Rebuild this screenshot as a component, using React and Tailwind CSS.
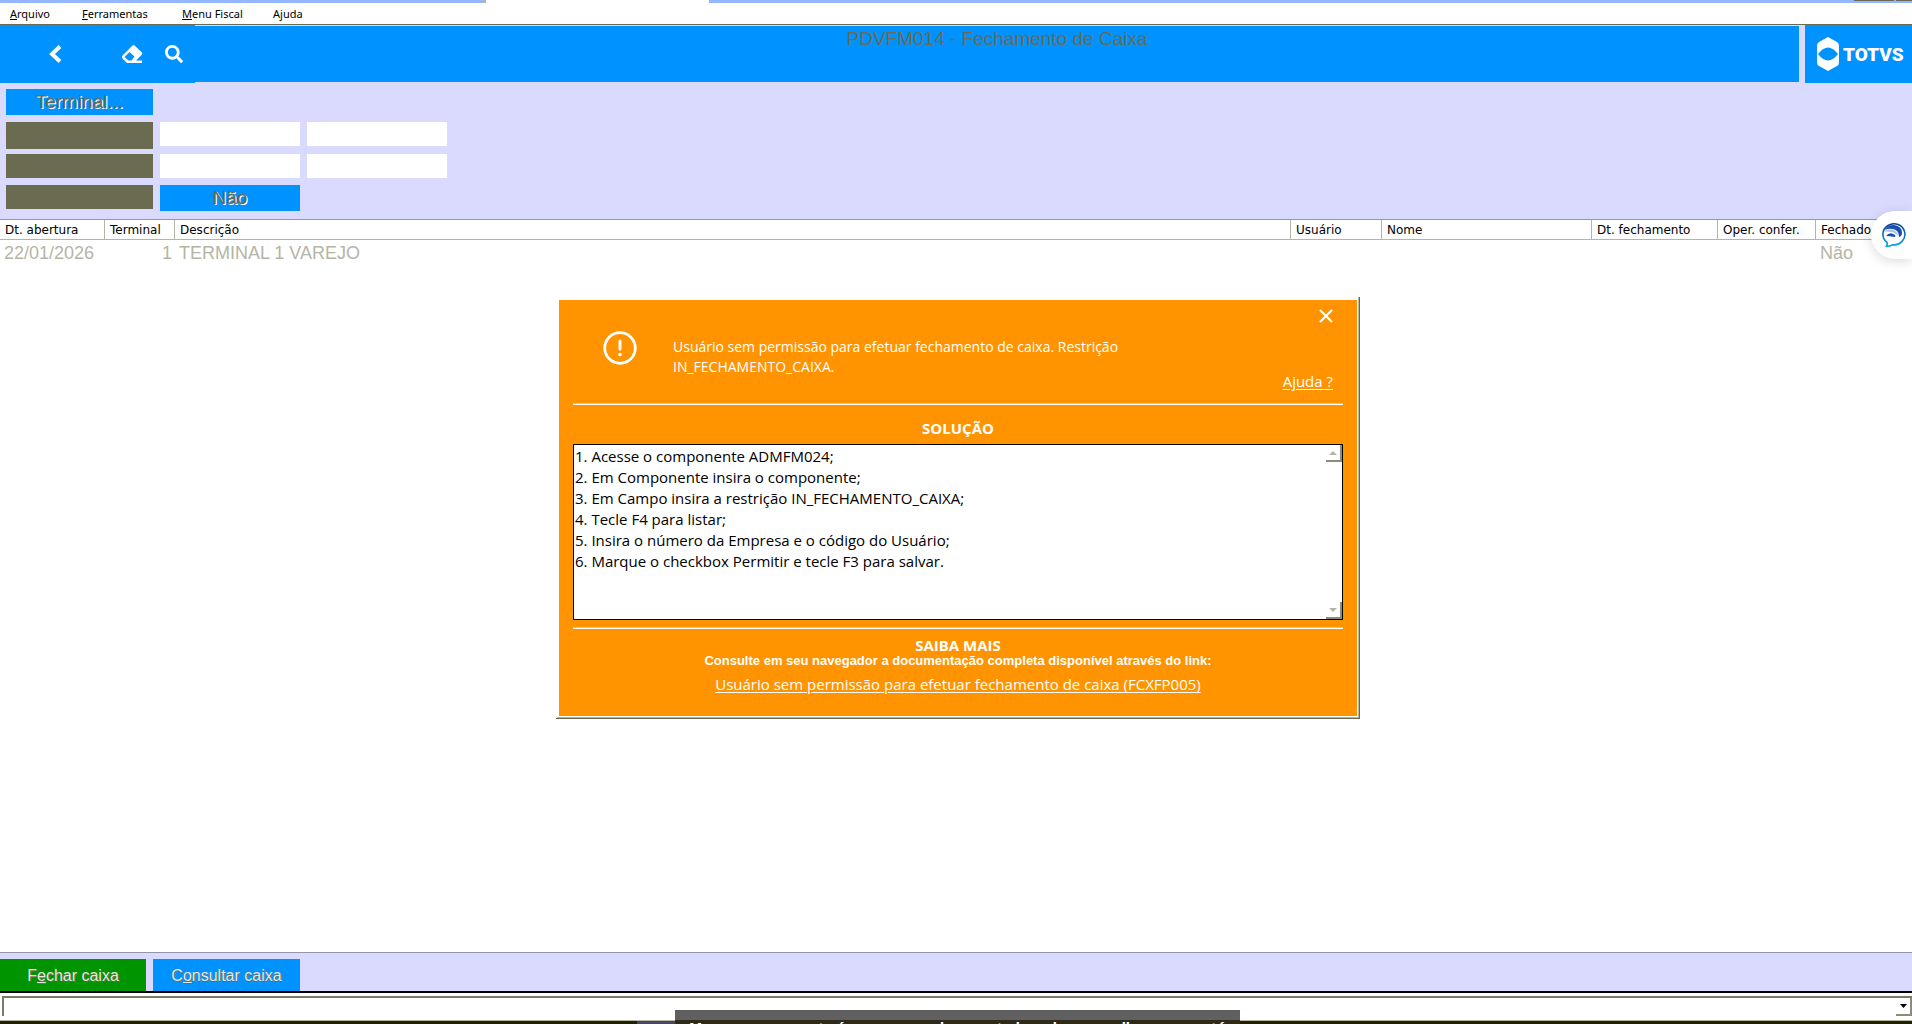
import React, { useState } from 'react'
import { FaSearch } from 'react-icons/fa'

const columns = [
  { label: 'Dt. abertura', width: 'w-[105px]' },
  { label: 'Terminal', width: 'w-[70px]' },
  { label: 'Descrição', width: 'w-auto' },
  { label: 'Usuário', width: 'w-[91px]' },
  { label: 'Nome', width: 'w-[210px]' },
  { label: 'Dt. fechamento', width: 'w-[126px]' },
  { label: 'Oper. confer.', width: 'w-[98px]' },
  { label: 'Fechado', width: 'w-[96px]' },
]

const rows = [
  { abertura: '22/01/2026', terminal: 1, descricao: 'TERMINAL 1 VAREJO', usuario: '', nome: '', fechamento: '', confer: '', fechado: 'Não' },
]

const solution = [
  '1. Acesse o componente ADMFM024;',
  '2. Em Componente insira o componente;',
  '3. Em Campo insira a restrição IN_FECHAMENTO_CAIXA;',
  '4. Tecle F4 para listar;',
  '5. Insira o número da Empresa e o código do Usuário;',
  '6. Marque o checkbox Permitir e tecle F3 para salvar.',
].join('\n')

const MenuBar = () => (
  <nav className="flex h-[22px] shrink-0 items-center border-b border-[#6b6b52] bg-white pt-px pl-[10px] font-['Noto_Sans',sans-serif] text-[11px] text-black">
    <button className="w-[72px] text-left"><u>A</u>rquivo</button>
    <button className="w-[100px] text-left"><u>F</u>erramentas</button>
    <button className="w-[91px] text-left"><u>M</u>enu Fiscal</button>
    <button className="text-left">A<u>j</u>uda</button>
  </nav>
)

const TotvsLogo = () => (
  <div className="flex w-[107px] items-center gap-1 bg-[#0092ff] pl-[12px] text-white">
    <svg width="22" height="34" viewBox="0 0 22 34" className="shrink-0">
      <path fill="#fff" d="M11 0 20 5Q22 6 22 9V25Q22 28 20 29L11 34 2 29Q0 28 0 25V9Q0 6 2 5Z" />
      <path fill="#0092ff" d="M1 17Q6 10.500 11 10.500T21 17Q16 23.500 11 23.500T1 17Z" />
    </svg>
    <span className="font-['Roboto',sans-serif] text-[19px] leading-none font-black">TOTVS</span>
  </div>
)

const Header = () => (
  <header className="flex h-[58px] shrink-0">
    <div className="flex w-[195px] items-center bg-[#0092ff] text-white">
      <button aria-label="Voltar" className="ml-[49px]">
        <svg width="13" height="18" viewBox="0 0 13 18">
          <path fill="none" stroke="#fff" strokeWidth="4" d="M11 1.500 3 9 11 16.500" />
        </svg>
      </button>
      <button aria-label="Limpar" className="ml-[60px]">
        <svg width="21" height="18" viewBox="0 0 21 18">
          <path fill="#fff" fillRule="evenodd" d="M12 0 20 7.500Q20.500 8.500 20 9.500L14 15.500H20V18H5L0 13V11L10.500 .5Q11 0 12 0ZM7.500 7 2.500 12 6.500 15.500H9.500L12.500 11.500Z" />
        </svg>
      </button>
      <button aria-label="Pesquisar" className="ml-[22px]"><FaSearch size={18} /></button>
    </div>
    <h1 className="my-px flex-1 bg-[#0092ff] text-center text-[19px] leading-[26px] text-[#6b6b52]">PDVFM014 - Fechamento de Caixa</h1>
    <div className="w-[6px]" />
    <TotvsLogo />
  </header>
)

const Filters = () => (
  <form className="grid shrink-0 grid-cols-[147px_140px_140px] grid-rows-[33px_32px_31px_34px] items-start gap-x-[7px] px-[6px] pt-[6px] text-[19px]">
    <button type="button" className="col-span-3 h-[26px] w-[147px] bg-[#0092ff] leading-[26px] text-[#6b6b52] [text-shadow:1px_1px_0_#fff]">Terminal...</button>
    <label htmlFor="abertura" className="h-[27px] bg-[#6b6b52]" />
    <input id="abertura" aria-label="Abertura inicial" className="h-6 w-full bg-white px-1 outline-none" />
    <input aria-label="Abertura final" className="h-6 w-full bg-white px-1 outline-none" />
    <label htmlFor="fechamento" className="h-6 bg-[#6b6b52]" />
    <input id="fechamento" aria-label="Fechamento inicial" className="h-6 w-full bg-white px-1 outline-none" />
    <input aria-label="Fechamento final" className="h-6 w-full bg-white px-1 outline-none" />
    <label htmlFor="fechado" className="h-6 bg-[#6b6b52]" />
    <button id="fechado" aria-label="Fechado: Não" type="button" className="h-[26px] bg-[#0092ff] leading-[26px] text-[#6b6b52] [text-shadow:1px_1px_0_#fff]">Não</button>
  </form>
)

const CashTable = () => (
  <table className="w-full table-fixed border-separate border-spacing-0 text-left">
    <thead>
      <tr className="h-5 font-['DejaVu_Sans',sans-serif] text-[12px] leading-[18px] text-black">
        {columns.map((c) => (
          <th key={c.label} className={`${c.width} overflow-hidden border-r border-b border-[#b5b5a5] p-0 pl-[5px] font-normal whitespace-nowrap`}>{c.label}</th>
        ))}
      </tr>
    </thead>
    <tbody>
      {rows.map((r) => (
        <tr key={r.terminal} className="text-[18px] leading-[26px] whitespace-nowrap text-[#b5b5a5]">
          <td className="p-0 pl-1">{r.abertura}</td>
          <td className="p-0 pr-[3px] text-right">{r.terminal}</td>
          <td className="p-0 pl-1">{r.descricao}</td>
          <td>{r.usuario}</td>
          <td>{r.nome}</td>
          <td>{r.fechamento}</td>
          <td>{r.confer}</td>
          <td className="p-0 pl-1">{r.fechado}</td>
        </tr>
      ))}
    </tbody>
  </table>
)

const Divider = () => <div className="h-[2px] border-t border-[#c6c6c6] bg-white" />

const ErrorDialog = ({ onClose }) => (
  <div role="dialog" aria-label="Aviso" className="absolute top-[77px] left-1/2 w-[804px] -translate-x-[400px] border-r border-b border-[#6b6b52] bg-white pl-px">
    <div className="border-r border-b border-[#b5b5a5] pt-[3px] pr-px pb-px pl-[2px]">
      <div className="bg-[#ff9400] px-[14px] pb-[22px] font-['Open_Sans',sans-serif] text-white">
        <div className="flex h-[103px]">
          <svg width="34" height="34" viewBox="0 0 34 34" className="mt-[31px] ml-[30px] shrink-0">
            <circle cx="17" cy="17" r="15.300" fill="none" stroke="#fff" strokeWidth="2.800" />
            <path d="M17 10V18" stroke="#fff" strokeWidth="3" strokeLinecap="round" />
            <circle cx="17" cy="23.500" r="1.800" fill="#fff" />
          </svg>
          <p className="mt-[37px] ml-[36px] w-[480px] text-[14px] leading-5">
            Usuário sem permissão para efetuar fechamento de caixa. Restrição IN_FECHAMENTO_CAIXA.
          </p>
          <div className="ml-auto flex flex-col items-end pt-[9px] pr-[10px]">
            <button aria-label="Fechar" onClick={onClose}>
              <svg width="14" height="14" viewBox="0 0 14 14">
                <path d="M1 1 13 13M13 1 1 13" stroke="#fff" strokeWidth="2.200" />
              </svg>
            </button>
            <a href="#ajuda" className="mt-[48px] text-[15px] leading-5 underline underline-offset-2">Ajuda ?</a>
          </div>
        </div>
        <Divider />
        <h2 className="pt-[13px] pb-[6px] text-center text-[15px] leading-5 font-bold">SOLUÇÃO</h2>
        <div className="relative h-[176px] border border-black bg-white">
          <textarea readOnly aria-label="Solução" value={solution} className="block h-full w-full resize-none overflow-hidden pt-px pl-px text-[15px] leading-[21px] text-black outline-none" />
          <button aria-label="Rolar para cima" className="absolute top-0 right-0 flex h-[17px] w-4 items-center justify-center border-r-2 border-b-2 border-[#8c8c7b] bg-white">
            <svg width="8" height="4" viewBox="0 0 8 4"><path fill="#b5b5a5" d="M4 0 8 4H0Z" /></svg>
          </button>
          <button aria-label="Rolar para baixo" className="absolute right-0 bottom-0 flex h-[17px] w-4 items-center justify-center border-r-2 border-b-2 border-[#8c8c7b] bg-white">
            <svg width="8" height="4" viewBox="0 0 8 4"><path fill="#b5b5a5" d="M0 0H8L4 4Z" /></svg>
          </button>
        </div>
        <div className="h-[7px]" />
        <Divider />
        <h2 className="pt-[8px] text-center text-[15px] leading-4 font-bold">SAIBA MAIS</h2>
        <p className="text-center font-['Liberation_Sans',sans-serif] text-[13px] leading-4 font-bold">Consulte em seu navegador a documentação completa disponível através do link:</p>
        <p className="pt-[5px] text-center text-[15px] leading-5">
          <a href="#fcxfp005" className="underline underline-offset-2">Usuário sem permissão para efetuar fechamento de caixa (FCXFP005)</a>
        </p>
      </div>
    </div>
  </div>
)

const ChatButton = () => (
  <button aria-label="Chat" className="absolute -top-[9px] right-0 flex h-12 w-[41px] items-center rounded-l-full bg-white pl-[11px] shadow-[0_2px_12px_rgba(0,0,0,0.15)]">
    <svg width="24" height="26" viewBox="0 0 24 26">
      <defs>
        <linearGradient id="ring" x1="0" y1="0" x2="0" y2="1">
          <stop offset="0" stopColor="#123a9c" />
          <stop offset="1" stopColor="#00a9e0" />
        </linearGradient>
      </defs>
      <path fill="none" stroke="url(#ring)" strokeWidth="1.600" strokeLinejoin="round" d="M5 20.500A11 10.500 0 1 1 11 22.800Q8 24.500 4 24.500Q6 22.500 5 20.500Z" />
      <path fill="#1750ac" d="M3 8Q6 2.500 12 3Q20 4 20 11Q20 14 17 15Q17 8 11 7Q6 6 3 8Z" />
      <path fill="#a9c4ea" d="M2 10Q5 6.500 10 7.500Q16 9 16 14.500Q13 10 9 10Q5 9 2 10Z" />
      <path fill="#1750ac" d="M4 14Q8 9 13 13Q14 15 12 15Q8 14 4 14Z" />
    </svg>
  </button>
)

const App = () => {
  const [open, setOpen] = useState(true)

  return (
    <div className="relative flex h-screen flex-col overflow-hidden bg-[#dadaff] font-['Liberation_Sans',sans-serif]">
      <div className="flex h-[3px] shrink-0 justify-between bg-[#94b5ff]">
        <div className="ml-[484px] w-[225px] border-l-2 border-[#b5b5a5] bg-white" />
        <div className="flex h-px gap-[2px]">
          <div className="w-10 bg-[#6b6b52]" />
          <div className="w-4 bg-[#6b6b52]" />
        </div>
      </div>
      <MenuBar />
      <Header />
      <Filters />

      <main className="relative min-h-0 flex-1 border-y border-[#9494ad] bg-white">
        <CashTable />
        {open && <ErrorDialog onClose={() => setOpen(false)} />}
        <ChatButton />
      </main>

      <div className="flex h-[38px] shrink-0 gap-[7px] pt-[6px] text-[16px] text-[#e7e7de]">
        <button className="w-[146px] bg-[#009400] pt-[2px] [text-shadow:1px_1px_0_#6b6b52]">F<u>e</u>char caixa</button>
        <button className="w-[147px] bg-[#0092ff] pt-[2px] [text-shadow:1px_1px_0_#6b6b52]">C<u>o</u>nsultar caixa</button>
      </div>

      <div className="shrink-0 border-t-2 border-black bg-white pt-[3px] pl-[2px]">
        <div className="relative h-5 border-t-2 border-l-2 border-[#7b7b66]">
          <select aria-label="Mensagens" className="block h-full w-full appearance-none bg-transparent outline-none" />
          <div className="pointer-events-none absolute top-0 right-0 flex h-[18px] w-4 items-center justify-center border-r-2 border-b-2 border-[#8c8c7b]">
            <svg width="7" height="4" viewBox="0 0 7 4"><path d="M0 0H7L3.500 4Z" /></svg>
          </div>
        </div>
        <div className="h-[4px]" />
      </div>
      <div className="h-1 shrink-0 border-t border-[#b5b5a5] bg-[#212100]">
        <div className="ml-[637px] h-full w-[45px] bg-[#4a4663]" />
      </div>

      {/* share notice, sits partly below the window edge */}
      <div className="absolute top-full left-[675px] -mt-[14px] h-10 w-[565px] overflow-hidden bg-[#606060] pt-[10px] font-['Noto_Sans',sans-serif] text-[14px] leading-4 font-bold whitespace-nowrap text-white">
        <div className="bg-[#2e2a18] pl-[14px]">Mas nesse momento é nossa sua rede conectada ao bem o melhor como está</div>
      </div>
    </div>
  )
}

export default App
